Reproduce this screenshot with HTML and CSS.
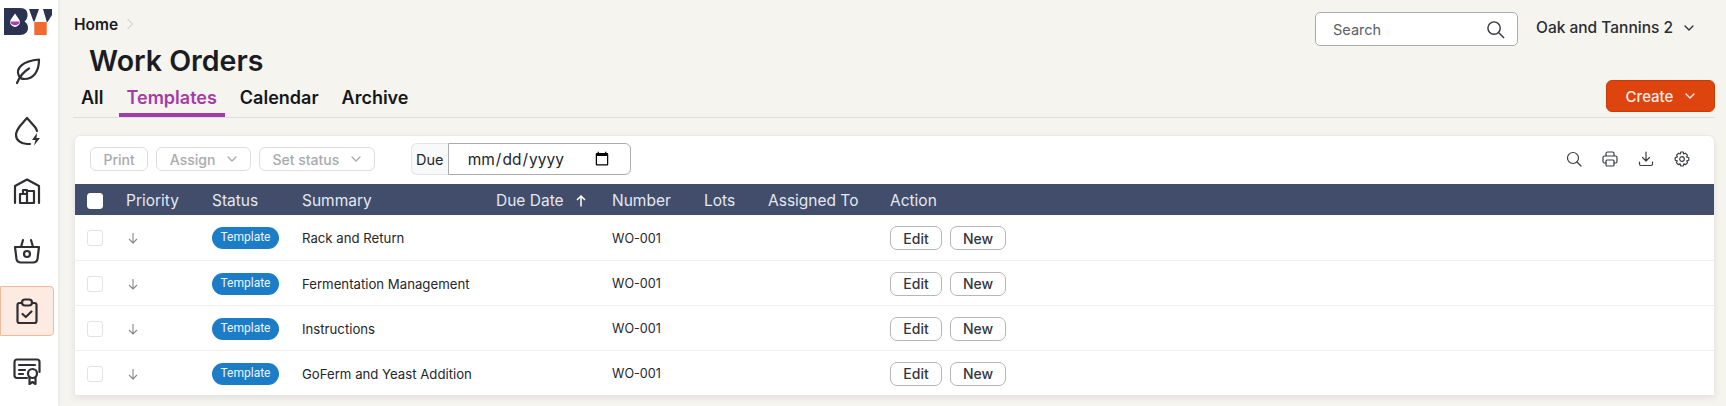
FILE: index.html
```html
<!DOCTYPE html>
<html lang="en">
<head>
<meta charset="utf-8">
<title>Work Orders</title>
<link rel="stylesheet" href="styles.css">
</head>
<body>
<aside class="sidebar">
  <svg class="logo" viewBox="0 0 48 27" width="48" height="27">
    <path d="M0 0H16C22 0 23.500 3 23.500 7C23.500 10 22.500 12 20.500 13.500C23 15 24 17 24 20C24 24 21 27 16 27H0Z" fill="#2b3252"/>
    <path d="M11 5.500L14.800 11A4.800 4.800 0 1 1 7.200 11Z" fill="#fff"/>
    <path d="M6.300 13.500H15.700A4.800 4.800 0 0 1 6.300 13.500Z" fill="#b03bb0"/>
    <path d="M25 1H35L30.500 13.500H29.500Z" fill="#2b3252"/>
    <path d="M39 1H48V7L43.500 14H42.800Z" fill="#2b3252"/>
    <rect x="30.300" y="14" width="12.400" height="13" fill="#f2692e"/>
  </svg>
  <a class="nav-item"><svg viewBox="0 0 28 28" width="28" height="28" class="ico"><path d="M6 19C2 11 10 4 26 2.500C26 14 21 22 11 22C9 22 7 21 6 19ZM16 11.500C10 15 7 19 4 26"/></svg></a>
  <a class="nav-item"><svg viewBox="0 0 28 30" width="28" height="30" class="ico"><path d="M14 2L22 11Q23.500 13 24 15M14 2L7 10C4 14 3 16 3 19C3 24 8 28 14 28H17"/><path class="fill" d="M24 17L19 24H22.500L21 29.500L27 22H23.500Z"/></svg></a>
  <a class="nav-item"><svg viewBox="0 0 28 28" width="28" height="28" class="ico"><path d="M2 26V9L14 2.500L26 9V26"/><path d="M7 26V17H14V26ZM14 20V14H21V26H14M10 17V13H14"/></svg></a>
  <a class="nav-item"><svg viewBox="0 0 28 28" width="28" height="28" class="ico"><path d="M2 10H26L24.500 22C24 24.500 22.500 25.500 20 25.500H8C5.500 25.500 4 24.500 3.500 22Z"/><circle cx="14" cy="17" r="3"/><path d="M8 10L10 3M20 10L18 3"/></svg></a>
  <a class="nav-item active"><svg viewBox="0 0 28 28" width="28" height="28" class="ico"><path d="M9 6H6.500C5.500 6 4.500 7 4.500 8V24C4.500 25 5.500 26 6.500 26H21.500C22.500 26 23.500 25 23.500 24V8C23.500 7 22.500 6 21.500 6H19"/><rect x="9" y="2.500" width="10" height="6" rx="3"/><path d="M9.500 17L12.800 20L18.500 14.500"/></svg></a>
  <a class="nav-item"><svg viewBox="0 0 28 28" width="28" height="28" class="ico"><path d="M14 21H4C2.500 21 1.500 20 1.500 18.500V5C1.500 3.500 2.500 2.500 4 2.500H24C25.500 2.500 26.500 3.500 26.500 5V15"/><path d="M6 8H22M6 13H12M6 17H10"/><circle cx="19.500" cy="16.500" r="4.500"/><path d="M16.500 20.500V27L19.500 25L22.500 27V20.500"/></svg></a>
</aside>
<main class="main">
  <header class="topbar">
    <nav class="crumb">Home <svg viewBox="0 0 8 12" width="8" height="12" class="crumb-sep"><path d="M1.500 1L6.500 6L1.500 11"/></svg></nav>
    <div class="search"><span>Search</span><svg viewBox="0 0 20 20" width="19" height="19" class="ico-dark"><circle cx="8.500" cy="8.500" r="6.500"/><path d="M13.500 13.500L19 19"/></svg></div>
    <div class="org">Oak and Tannins 2 <svg viewBox="0 0 10 6" width="10" height="6" class="chev"><path d="M1 1L5 5L9 1"/></svg></div>
  </header>
  <h1 class="title">Work Orders</h1>
  <div class="tabs">
    <a class="tab">All</a>
    <a class="tab current">Templates</a>
    <a class="tab">Calendar</a>
    <a class="tab">Archive</a>
    <button class="create">Create <svg viewBox="0 0 10 6" width="10" height="6" class="chev"><path d="M1 1L5 5L9 1"/></svg></button>
  </div>
  <section class="card">
    <div class="toolbar">
      <button class="ghost">Print</button>
      <button class="ghost">Assign <svg viewBox="0 0 10 6" width="10" height="6" class="chev"><path d="M1 1L5 5L9 1"/></svg></button>
      <button class="ghost">Set status <svg viewBox="0 0 10 6" width="10" height="6" class="chev"><path d="M1 1L5 5L9 1"/></svg></button>
      <div class="due"><span class="due-label">Due</span><input class="due-input" type="date"></div>
      <div class="tools">
        <svg viewBox="0 0 16 16" width="16" height="16" class="tool"><circle cx="7" cy="7" r="5.500"/><path d="M11 11L15 15"/></svg>
        <svg viewBox="0 0 16 16" width="16" height="16" class="tool"><path d="M4 5V2.500C4 1.500 4.500 1 5.500 1H10.500C11.500 1 12 1.500 12 2.500V5M4 12H2.500C1.500 12 1 11.500 1 10.500V6.500C1 5.500 1.500 5 2.500 5H13.500C14.500 5 15 5.500 15 6.500V10.500C15 11.500 14.500 12 13.500 12H12"/><rect x="4" y="9" width="8" height="6" rx="1"/></svg>
        <svg viewBox="0 0 16 16" width="16" height="16" class="tool"><path d="M8 1V10M4.500 6.500L8 10L11.500 6.500M1.500 11V13C1.500 14 2 14.500 3 14.500H13C14 14.500 14.500 14 14.500 13V11"/></svg>
        <svg viewBox="0 0 16 16" width="16" height="16" class="tool"><circle cx="8" cy="8" r="2.300"/><path d="M6.800 1H9.200L9.700 3L11.400 2.200L13.400 4.200L12.600 5.900L14.800 6.800V9.200L12.800 9.900L13.600 11.700L11.700 13.600L9.900 12.800L9.200 15H6.800L6.100 12.800L4.300 13.600L2.400 11.700L3.200 9.900L1.200 9.200V6.800L3.400 5.900L2.600 4.200L4.600 2.200L6.300 3Z"/></svg>
      </div>
    </div>
    <table class="grid">
      <colgroup>
        <col class="c-check"><col class="c-priority"><col class="c-status"><col class="c-summary"><col class="c-due"><col class="c-number"><col class="c-lots"><col class="c-assigned"><col>
      </colgroup>
      <thead>
        <tr>
          <th><span class="check head"></span></th>
          <th>Priority</th><th>Status</th><th>Summary</th>
          <th>Due Date <svg viewBox="0 0 10 12" width="10" height="12" class="sort"><path d="M5 11.500V1M1 5L5 1L9 5"/></svg></th>
          <th>Number</th><th>Lots</th><th>Assigned To</th><th>Action</th>
        </tr>
      </thead>
      <tbody>
        <tr>
          <td><span class="check"></span></td>
          <td><svg viewBox="0 0 10 12" width="10" height="12" class="down"><path d="M5 1V11M1 7L5 11L9 7"/></svg></td>
          <td><span class="badge">Template</span></td>
          <td>Rack and Return</td><td></td><td class="num">WO-001</td><td></td><td></td>
          <td><div class="actions"><button class="small edit">Edit</button><button class="small new">New</button></div></td>
        </tr>
        <tr>
          <td><span class="check"></span></td>
          <td><svg viewBox="0 0 10 12" width="10" height="12" class="down"><path d="M5 1V11M1 7L5 11L9 7"/></svg></td>
          <td><span class="badge">Template</span></td>
          <td>Fermentation Management</td><td></td><td class="num">WO-001</td><td></td><td></td>
          <td><div class="actions"><button class="small edit">Edit</button><button class="small new">New</button></div></td>
        </tr>
        <tr>
          <td><span class="check"></span></td>
          <td><svg viewBox="0 0 10 12" width="10" height="12" class="down"><path d="M5 1V11M1 7L5 11L9 7"/></svg></td>
          <td><span class="badge">Template</span></td>
          <td>Instructions</td><td></td><td class="num">WO-001</td><td></td><td></td>
          <td><div class="actions"><button class="small edit">Edit</button><button class="small new">New</button></div></td>
        </tr>
        <tr>
          <td><span class="check"></span></td>
          <td><svg viewBox="0 0 10 12" width="10" height="12" class="down"><path d="M5 1V11M1 7L5 11L9 7"/></svg></td>
          <td><span class="badge">Template</span></td>
          <td>GoFerm and Yeast Addition</td><td></td><td class="num">WO-001</td><td></td><td></td>
          <td><div class="actions"><button class="small edit">Edit</button><button class="small new">New</button></div></td>
        </tr>
      </tbody>
    </table>
  </section>
</main>
</body>
</html>
```
FILE: styles.css
```css
* { box-sizing: border-box; }
html, body { margin: 0; height: 406px; overflow: hidden; }
body {
  display: flex;
  background: #f5f4ef;
  color: #1a1c22;
  font-family: Inter, "Liberation Sans", sans-serif;
}
button { font-family: inherit; }

.sidebar {
  width: 58px;
  flex: none;
  background: #fff;
  box-shadow: 1px 0 4px rgba(0, 0, 0, .06);
  display: flex;
  flex-direction: column;
  align-items: flex-start;
  padding-top: 8px;
}
.logo { margin-left: 4px; margin-bottom: 1px; flex: none; }
.nav-item {
  width: 54px;
  height: 50px;
  margin-top: 10px;
  display: flex;
  align-items: center;
  justify-content: center;
  border: 1px solid transparent;
  border-radius: 0 4px 4px 0;
}
.nav-item.active { background: #fdebe1; border-color: #f0b99a; }
.ico { fill: none; stroke: #2f2f33; stroke-width: 2.200; stroke-linecap: round; stroke-linejoin: round; }
.ico .fill { fill: #2f2f33; stroke: none; }

.main { flex: 1; min-width: 0; padding: 12px 11px 0 16px; }

.topbar { display: flex; align-items: center; height: 34px; }
.crumb { font-size: 15.500px; font-weight: 600; margin-right: auto; display: flex; align-items: center; gap: 8px; padding-bottom: 10px; }
.crumb-sep { fill: none; stroke: #c4c4c4; stroke-width: 1; }
.search {
  width: 203px;
  height: 34px;
  background: #fff;
  border: 1px solid #a8abb0;
  border-radius: 5px;
  display: flex;
  align-items: center;
  justify-content: space-between;
  padding: 0 12px 0 17px;
  font-size: 14.500px;
  color: #5c6068;
}
.ico-dark { fill: none; stroke: #33363c; stroke-width: 1.500; }
.org { margin-left: 18px; width: 179px; font-size: 15.500px; font-weight: 500; color: #2a2d33; display: flex; align-items: center; gap: 9px; padding-bottom: 3px; }
.chev { fill: none; stroke: currentColor; stroke-width: 1.300; stroke-linecap: round; stroke-linejoin: round; }
.org .chev { margin-left: 2px; }

.title { margin: 0 0 0 15px; height: 30px; font-size: 28.500px; line-height: 30px; font-weight: 600; color: #1a1c24; }

.tabs {
  display: flex;
  align-items: flex-start;
  height: 42px;
  border-bottom: 1px solid #dedfe3;
  gap: 7px;
  margin-left: -1px;
}
.tab {
  height: 41px;
  padding: 11px 8px 0;
  font-size: 18px;
  line-height: 22px;
  font-weight: 600;
  color: #14161a;
  border-bottom: 4px solid transparent;
}
.tab.current { color: #a53ba8; border-bottom-color: #a53ba8; }
.create {
  margin-left: auto;
  margin-top: 4px;
  width: 109px;
  height: 32px;
  background: #dd440e;
  color: #fbefe9;
  border: 1px solid #c83c0a;
  border-radius: 6px;
  font-size: 15px;
  font-weight: 500;
  display: flex;
  align-items: center;
  justify-content: center;
  gap: 12px;
}

.card {
  margin-top: 17px;
  height: 260px;
  background: #fff;
  border: 1px solid #e9e9e9;
  border-bottom: 0;
  border-radius: 6px 6px 0 0;
  box-shadow: 0 3px 6px rgba(0, 0, 0, .08);
}
.toolbar {
  height: 48px;
  display: flex;
  align-items: center;
  padding: 0 24px 2px 15px;
  gap: 8px;
}
.ghost {
  height: 24px;
  background: #fff;
  border: 1px solid #dcdde0;
  border-radius: 6px;
  padding: 0 12.500px;
  color: #a8aaae;
  font-size: 14px;
  font-weight: 500;
  display: flex;
  align-items: center;
  gap: 12px;
}
.due { display: flex; height: 32px; margin-left: 28px; }
.due-label {
  width: 37px;
  display: flex;
  align-items: center;
  justify-content: center;
  background: #f8f9fa;
  border: 1px solid #e3e4e7;
  border-right: 0;
  border-radius: 6px 0 0 6px;
  font-size: 14.500px;
  color: #23262b;
}
.due-input {
  width: 183px;
  height: 32px;
  border: 1px solid #a8abb0;
  border-radius: 0 6px 6px 0;
  background: #fff;
  padding: 0 18px;
  font-family: inherit;
  font-size: 15.500px;
  color: #23262b;
}
.tools { margin-left: auto; display: flex; gap: 20px; }
.tool { fill: none; stroke: #3a3d44; stroke-width: 1.200; stroke-linecap: round; stroke-linejoin: round; }

.grid { width: 100%; border-collapse: collapse; table-layout: fixed; }
.c-check { width: 39px; }
.c-priority { width: 86px; }
.c-status { width: 90px; }
.c-summary { width: 194px; }
.c-due { width: 116px; }
.c-number { width: 92px; }
.c-lots { width: 64px; }
.c-assigned { width: 122px; }
.grid th {
  height: 31px;
  padding: 2px 0 0 12px;
  background: #414d6b;
  color: #e4e8f0;
  font-size: 15.500px;
  font-weight: 400;
  text-align: left;
  white-space: nowrap;
}
.grid td {
  height: 45px;
  padding: 2px 0 0 12px;
  font-size: 13.200px;
  color: #24262b;
  border-bottom: 1px solid #eeeff1;
  white-space: nowrap;
}
.grid td.num { font-size: 12.600px; }
.grid tbody tr:last-child td { border-bottom: 0; }
.check {
  display: block;
  width: 16px;
  height: 16px;
  border: 1px solid #e2e3e6;
  border-radius: 3px;
  background: #fff;
}
.check.head { border-color: #fff; }
.sort { fill: none; stroke: #fff; stroke-width: 1.500; margin-left: 8px; vertical-align: -1px; }
.down { display: block; margin-left: 2px; fill: none; stroke: #85878d; stroke-width: 1.100; }
.badge {
  display: inline-block;
  width: 67px;
  height: 22px;
  line-height: 21px;
  text-align: center;
  border-radius: 11px;
  background: #1c7cc6;
  color: #eef6fc;
  font-family: Roboto, sans-serif;
  font-size: 12px;
}
.actions { display: flex; gap: 8px; }
.small {
  height: 24px;
  background: #fff;
  border: 1px solid #b4b6ba;
  border-radius: 7px;
  padding: 0;
  font-size: 14px;
  font-weight: 500;
  color: #34373d;
}
.edit { width: 52px; }
.new { width: 56px; }
```
